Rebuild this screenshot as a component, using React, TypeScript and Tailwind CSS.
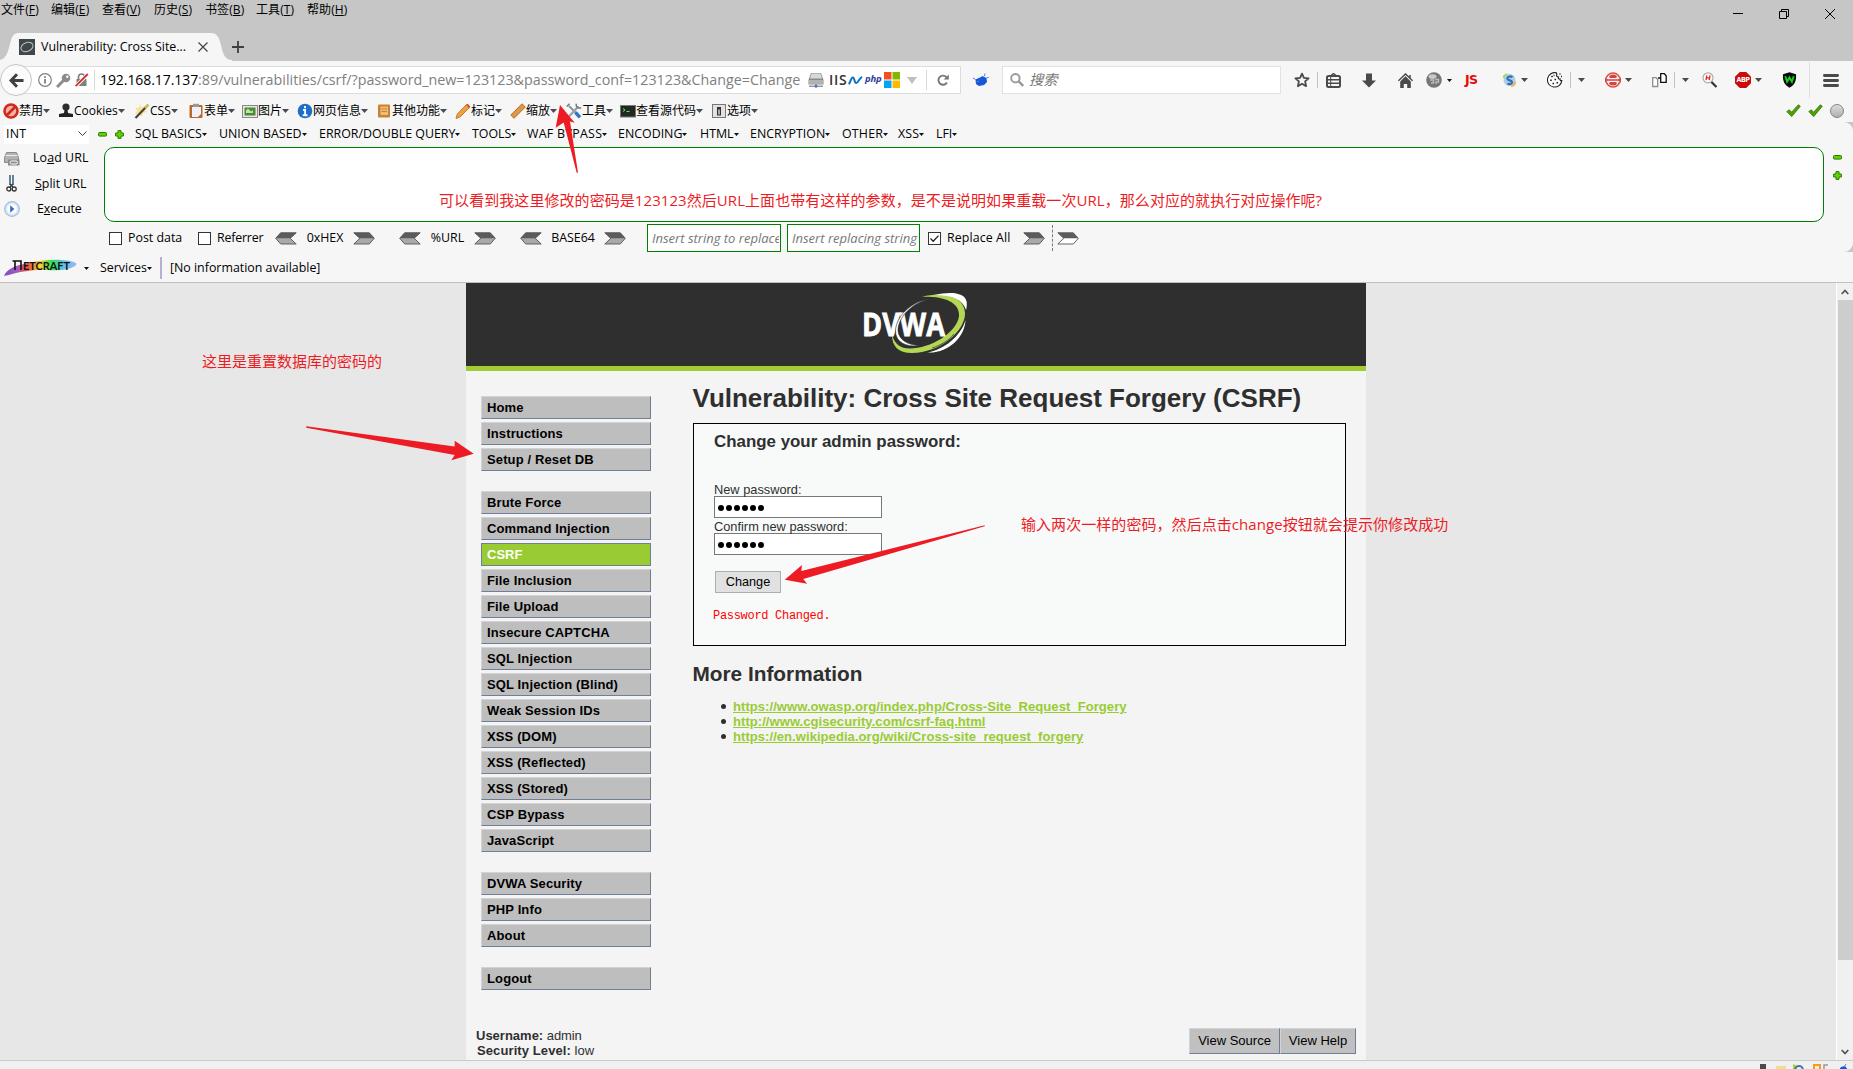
import type { ReactNode } from "react";

const kids = "flex items-center shrink-0 whitespace-nowrap";

/* ---------- small shared pieces ---------- */

function Caret({ className = "" }: { className?: string }) {
  return (
    <svg className={"shrink-0 " + className} width="7" height="4" viewBox="0 0 7 4">
      <path d="M0 0h7L3.5 4z" fill="#4a4a4a" />
    </svg>
  );
}

function TinyCaret() {
  return (
    <svg className="shrink-0" width="5" height="3" viewBox="0 0 5 3">
      <path d="M0 0h5L2.5 3z" fill="#111" />
    </svg>
  );
}

function Divider({ className = "" }: { className?: string }) {
  return <div className={"w-px shrink-0 bg-[#c4c4c4] " + className} />;
}

function Checkbox({ checked = false }: { checked?: boolean }) {
  return (
    <span className="flex h-[13px] w-[13px] shrink-0 items-center justify-center border border-[#333] bg-white">
      {checked && (
        <svg width="11" height="11" viewBox="0 0 11 11" fill="none" stroke="#222" strokeWidth="1.3">
          <path d="M1.5 5.5l2.7 2.7L9.5 2.6" />
        </svg>
      )}
    </span>
  );
}

function ArrowTag({ flip = false, hollow = false }: { flip?: boolean; hollow?: boolean }) {
  return (
    <svg className={flip ? "-scale-x-100 shrink-0" : "shrink-0"} width="22" height="13" viewBox="0 0 22 13">
      <path d="M.8.8h15.5l5 5.500-5 5.700H.8l6-5.700z" fill={hollow ? "#fff" : "#a9a9a9"} />
      <path d="M.8.8h15.500l5 5.500H6.800z" fill="#5c5c5c" />
      <path d="M.8.8h15.500l5 5.500-5 5.700H.8l6-5.700z" fill="none" stroke="#555" strokeWidth=".9" />
    </svg>
  );
}

function GreenMinus() {
  return (
    <svg className="shrink-0" width="9" height="9" viewBox="0 0 9 9">
      <rect x=".5" y="2.5" width="8" height="3.6" rx="1" fill="#5fd400" stroke="#2d7a00" />
    </svg>
  );
}

function GreenPlus() {
  return (
    <svg className="shrink-0" width="9" height="9" viewBox="0 0 9 9">
      <path d="M3 .6h3V3h2.400v3H6v2.400H3V6H.6V3H3z" fill="#5fd400" stroke="#2d7a00" strokeLinejoin="round" />
    </svg>
  );
}

function CheckMark() {
  return (
    <svg className="shrink-0" width="15" height="14" viewBox="0 0 15 14">
      <path d="M.8 7.600l2.600-1.800 2.200 2.400L12.400.8l1.900 1.500-8.600 10.300z" fill="#4fa000" stroke="#2f7400" strokeWidth=".8" />
    </svg>
  );
}

/* ---------- title bar ---------- */

const menus: [string, string, string][] = [
  ["文件", "F", "w-[50px]"],
  ["编辑", "E", "w-[51px]"],
  ["查看", "V", "w-[52px]"],
  ["历史", "S", "w-[51px]"],
  ["书签", "B", "w-[51px]"],
  ["工具", "T", "w-[51px]"],
  ["帮助", "H", "w-[51px]"],
];

function TitleBar() {
  return (
    <div className="relative flex h-[61px] flex-col justify-between bg-[#c6c6c6]">
      <div className="flex h-5 items-center pl-[1px] text-[12px] leading-4 tracking-[0.1px] text-black">
        {menus.map(([t, k, w]) => (
          <div key={k} className={"shrink-0 whitespace-nowrap " + w}>
            {t}(<u className="underline-offset-1">{k}</u>)
          </div>
        ))}
      </div>
      <div className="absolute top-[4px] right-0 flex h-5 items-center gap-[36px] pr-[18px]">
        <svg width="10" height="10" viewBox="0 0 10 10" stroke="#000" fill="none"><path d="M0 4.500h10" /></svg>
        <svg width="10" height="10" viewBox="0 0 10 10" stroke="#000" fill="none"><path d="M.5 2.500h7v7h-7zM2.500 2.500v-2h7v7h-2" /></svg>
        <svg width="10" height="10" viewBox="0 0 10 10" stroke="#000" fill="none"><path d="M0 0l10 10M10 0L0 10" /></svg>
      </div>
      <div className="flex h-[29px] items-center">
        <div className="relative flex h-[29px] w-[232px] shrink-0 items-center">
          <svg className="absolute top-0 left-0" width="232" height="29" viewBox="0 0 232 29">
            <path d="M0 28C6 27 8 20 10 12 12 3 14 1 20 1h191c6 0 8 4 10 12 2 9 4 15 11 15v1H0z" fill="#f6f6f6" />
          </svg>
          <div className="relative mt-[1px] flex items-center pl-[19px]">
            <svg width="16" height="16" viewBox="0 0 16 16">
              <rect width="16" height="16" fill="#3f4650" />
              <ellipse cx="8" cy="8" rx="6.300" ry="4.300" fill="none" stroke="#b9c7a5" strokeWidth="1" transform="rotate(-22 8 8)" />
            </svg>
            <span className="ml-[6px] w-[157px] text-[12.4px] whitespace-nowrap text-black">Vulnerability: Cross Site...</span>
            <svg width="10" height="10" viewBox="0 0 10 10" stroke="#444" strokeWidth="1.200"><path d="M.5.5l9 9M9.500.5l-9 9" /></svg>
          </div>
        </div>
        <svg className="mt-[1px]" width="12" height="12" viewBox="0 0 12 12" stroke="#3f3f3f" strokeWidth="1.800"><path d="M6 0v12M0 6h12" /></svg>
      </div>
    </div>
  );
}

/* ---------- navigation bar ---------- */

function ServerInfoIcons() {
  return (
    <div className="flex w-[110px] shrink-0 items-center">
      <svg className="shrink-0" width="16" height="16" viewBox="0 0 16 16">
        <path d="M3 1h10l2.500 7v4.500H.5V8z" fill="#8a8a8a" />
        <path d="M3.500 1.500h9l1.500 5H2z" fill="#d8d8d8" />
        <path d="M1 9h14M1 11h14" stroke="#e3e3e3" strokeWidth=".9" />
        <path d="M1 14.200h14M8 12v2" stroke="#666" />
        <circle cx="8" cy="14.300" r="1.500" fill="#3f7be0" />
      </svg>
      <span className="ml-[5px] w-[19px] shrink-0 text-[14px] leading-4 font-semibold tracking-[0.7px] text-[#333]">IIS</span>
      <svg className="shrink-0" width="15" height="9" viewBox="0 0 15 9" fill="none" stroke="#0a72c4" strokeWidth="2">
        <path d="M.6 8C2.600 7 2.800 1.400 4.800 1.400 6.800 1.400 6 7 8.200 7c2.400 0 3-5.400 6-6" />
      </svg>
      <span className="ml-[2px] w-[18px] shrink-0 pb-[2px] text-[9.5px] leading-3 font-bold tracking-[-0.2px] text-[#2c3e9c] italic">php</span>
      <svg className="ml-[1px] shrink-0" width="16" height="16" viewBox="0 0 16 16">
        <path fill="#f25022" d="M0 0h7.500v7.500H0z" />
        <path fill="#7fba00" d="M8.500 0H16v7.500H8.500z" />
        <path fill="#00a4ef" d="M0 8.500h7.500V16H0z" />
        <path fill="#ffb900" d="M8.500 8.500H16V16H8.500z" />
      </svg>
      <svg className="ml-[7px] shrink-0" width="10" height="7" viewBox="0 0 10 7"><path d="M0 0h10L5 7z" fill="#c0c0c0" /></svg>
    </div>
  );
}

function UrlBar() {
  return (
    <div className="flex h-[28px] w-[944px] shrink-0 items-center border border-[#dcdcdc] bg-white pl-[20px]">
      <svg className="shrink-0" width="14" height="14" viewBox="0 0 14 14" fill="none" stroke="#808080">
        <circle cx="7" cy="7" r="6.300" strokeWidth="1.200" />
        <path d="M7 6v4.400M7 3.200v1.700" strokeWidth="1.800" />
      </svg>
      <svg className="ml-[4px] shrink-0" width="15" height="15" viewBox="0 0 15 15">
        <circle cx="10" cy="5" r="4.300" fill="#8c8c8c" />
        <path d="M7.500 7.500L1 14" stroke="#8c8c8c" strokeWidth="3" />
        <circle cx="11.300" cy="3.700" r="1.200" fill="#fff" />
      </svg>
      <svg className="ml-[4px] shrink-0" width="14" height="14" viewBox="0 0 14 14">
        <path d="M1.500 6h10v7h-10z" fill="#808080" />
        <path d="M3.500 6V4a3 3 0 0 1 6 0v2" fill="none" stroke="#808080" strokeWidth="1.700" />
        <path d="M1 13L13 1" stroke="#fff" strokeWidth="3.400" />
        <path d="M.6 13.200L12.800 1" stroke="#d92d27" strokeWidth="1.800" />
      </svg>
      <Divider className="ml-[5px] h-5 !bg-[#dadada]" />
      <div className="ml-[5px] flex w-[702px] shrink-0 overflow-hidden leading-5 whitespace-nowrap">
        <span className="text-[14px] tracking-[-0.07px] text-black">192.168.17.137</span>
        <span className="text-[14.3px] text-[#808080]">:89/vulnerabilities/csrf/?password_new=123123&amp;password_conf=123123&amp;Change=Change</span>
      </div>
      <div className="w-[6px] shrink-0" />
      <ServerInfoIcons />
      <Divider className="ml-[8px] h-5 !bg-[#dadada]" />
      <svg className="ml-[10px] shrink-0" width="12" height="12" viewBox="0 0 12 12">
        <path d="M10 8.600A4.600 4.600 0 1 1 9.400 3" fill="none" stroke="#777" strokeWidth="1.900" />
        <path d="M11.800.4v5.200H6.600z" fill="#777" />
      </svg>
    </div>
  );
}

function NavIcon({ className, children }: { className: string; children: ReactNode }) {
  return <div className={"flex shrink-0 items-center " + className}>{children}</div>;
}

function NavBar() {
  return (
    <div className="flex h-[40px] items-center bg-[#f6f6f6] pb-[2px]">
      <div className="relative z-10 -mr-[15px] flex h-[32px] w-[32px] shrink-0 items-center justify-center rounded-full border border-[#c4c4c4] bg-[#fbfbfb]">
        <svg width="15" height="15" viewBox="0 0 15 15" fill="none" stroke="#404040" strokeWidth="3">
          <path d="M8 1.200L2 7.500l6 6.300M2.400 7.500H14.500" />
        </svg>
      </div>
      <UrlBar />
      <NavIcon className="ml-[12px] w-[29px]">
        <svg width="16" height="14" viewBox="0 0 16 14">
          <path d="M2.500 6.500l5-2.200L9.500 3l4 2 .5 4-3 3-5 1-3-2z" fill="#1557d6" />
          <path d="M0 5l2.500 1.500M11.500 3l.5-2.500M13.500 5l2.300-.8M3.500 9l3-1" stroke="#4a7fd8" />
        </svg>
      </NavIcon>
      <div className="flex h-[28px] w-[279px] shrink-0 items-center border border-[#e2e2e2] bg-white pl-[7px]">
        <svg width="14" height="14" viewBox="0 0 14 14" fill="none" stroke="#999">
          <circle cx="5.400" cy="5.200" r="4.200" strokeWidth="1.900" />
          <path d="M8.400 8.200l4.800 4.800" strokeWidth="2.400" />
        </svg>
        <span className="ml-[5px] text-[14.3px] leading-5 text-[#7a7a7a] italic">搜索</span>
      </div>
      <NavIcon className="ml-[13px] w-[23px]">
        <svg width="16" height="16" viewBox="0 0 16 16" fill="none" stroke="#4a4a4a" strokeWidth="1.800" strokeLinejoin="round">
          <path d="M8 1.600l1.900 4.200 4.700.5-3.500 3.100 1 4.800L8 11.800l-4.100 2.400 1-4.800L1.400 6.300l4.700-.5z" />
        </svg>
      </NavIcon>
      <Divider className="h-4" />
      <NavIcon className="ml-[8px] w-[36px]">
        <svg width="15" height="15" viewBox="0 0 15 15" fill="none" stroke="#4a4a4a">
          <rect x="1" y="3" width="13" height="11" rx="1.500" strokeWidth="2" />
          <path d="M5 2.500L7.500.5 10 2.500M2 6.700h11M2 10.300h11" strokeWidth="1.400" />
          <path d="M4.700 4v9" strokeWidth="1" />
        </svg>
      </NavIcon>
      <NavIcon className="w-[36px]">
        <svg width="14" height="15" viewBox="0 0 14 15"><path d="M4 .5h6v7h4L7 14.500 0 7.500h4z" fill="#4a4a4a" /></svg>
      </NavIcon>
      <NavIcon className="w-[28px]">
        <svg width="15" height="15" viewBox="0 0 15 15">
          <path d="M2.200 8.400L7.500 3.200l5.300 5.200V15H9.200v-4H5.800v4H2.200z" fill="#4a4a4a" />
          <path d="M.4 7.800L7.500 1l7.100 6.800M12 2v3" fill="none" stroke="#4a4a4a" strokeWidth="1.500" />
        </svg>
      </NavIcon>
      <NavIcon className="w-[39px] gap-[5px]">
        <svg width="16" height="16" viewBox="0 0 16 16">
          <circle cx="8" cy="8" r="7.800" fill="#767676" />
          <ellipse cx="6.500" cy="4.600" rx="4" ry="2.400" fill="#c8c8c8" />
          <path d="M4 8h3.500v3H5M9 7.500h3.500V10H10v2" stroke="#bcbcbc" strokeWidth="1.400" fill="none" />
        </svg>
        <TinyCaret />
      </NavIcon>
      <NavIcon className="w-[37px]">
        <span className="font-['DejaVu_Sans',sans-serif] text-[12.5px] leading-4 font-bold tracking-[-0.6px] text-[#e50b0b]">JS</span>
      </NavIcon>
      <NavIcon className="w-[45px] gap-[5px]">
        <svg width="14" height="14" viewBox="0 0 14 14" fill="none">
          <path d="M1 5C.5 2 3 .5 5.500.5L4.500 5z" fill="#a6dc3c" />
          <circle cx="7.500" cy="7" r="6" fill="#a9cdec" />
          <path d="M10.500 4.200C8 2.400 4.900 4 5.500 5.800s4.500 1.400 4.500 3.400-2.600 2.300-4.500 1.300" stroke="#3b6ea5" strokeWidth="2.200" />
          <path d="M13 8.500c.6 2.600-1 4.600-4 4.800" stroke="#f0b13a" strokeWidth="1.600" />
        </svg>
        <Caret />
      </NavIcon>
      <NavIcon className="w-[23px]">
        <svg width="16" height="16" viewBox="0 0 16 16">
          <path d="M9.500.9A7.200 7.200 0 1 0 14.800 8.600c-1.400.3-2-.6-1.700-1.600-1.600.3-2.200-.7-1.600-1.900C9.700 5 9 3.500 9.900 2.300z" fill="#fff" stroke="#222" strokeWidth="1.100" />
          <path d="M4.200 4.600h1.600M7.500 7.500h1.600M3.200 8.200h1.600M5.500 11.500h1.600M9.500 10.800h1.600M6.500 3.500h1M12.500 2h1M14 4.500h1" stroke="#222" strokeWidth="1.500" />
        </svg>
      </NavIcon>
      <Divider className="h-4" />
      <Caret className="mr-[20px] ml-[7px]" />
      <NavIcon className="w-[47px] gap-[4px]">
        <svg width="16" height="16" viewBox="0 0 16 16" fill="none">
          <circle cx="8" cy="8" r="7" stroke="#d8504c" strokeWidth="1.600" />
          <path d="M4 5Q4.500 2.500 8 2.500T12 5L11 6H5zM4 11Q4.500 13.500 8 13.500T12 11L11 10H5z" fill="#d8433f" />
          <path d="M0 8h16" stroke="#f6f6f6" strokeWidth="3.200" />
          <path d="M2.500 8h11M0 6.300l2.500 1.700L0 9.700zM16 6.300L13.500 8 16 9.700z" stroke="#d8433f" strokeWidth="1.400" fill="#d8433f" />
        </svg>
        <Caret />
      </NavIcon>
      <NavIcon className="w-[22px]">
        <svg width="15" height="16" viewBox="0 0 15 16" fill="#fff" strokeWidth="1.300">
          <path d="M.7 5.700h3.300l1.700 1.800v7H.7z" stroke="#8f8f8f" />
          <path d="M8.700 1.700h3.600l1.900 2v6.600H8.700zM6 6h2.500" stroke="#111" />
        </svg>
      </NavIcon>
      <Divider className="h-4" />
      <Caret className="mr-[13px] ml-[7px]" />
      <NavIcon className="w-[33px]">
        <svg width="16" height="16" viewBox="0 0 16 16">
          <path d="M9 9.500l5.500 5.500" stroke="#333" strokeWidth="2.200" />
          <circle cx="6" cy="5.800" r="5" fill="#fff" stroke="#aaa" strokeWidth="1.200" />
          <path d="M4.800 3.400L4 8.200M8 3.400l-.8 4.800M4.500 5.800h3" stroke="#e0241f" strokeWidth="1.300" />
        </svg>
      </NavIcon>
      <NavIcon className="w-[47px] gap-[4px]">
        <span className="flex h-[16px] w-[16px] items-center justify-center bg-[#cc0a0a] font-['DejaVu_Sans_Condensed','DejaVu_Sans',sans-serif] text-[7px] leading-[10px] font-bold tracking-[-0.5px] text-white [clip-path:polygon(30%_0,70%_0,100%_30%,100%_70%,70%_100%,30%_100%,0_70%,0_30%)]">ABP</span>
        <Caret />
      </NavIcon>
      <NavIcon className="w-[27px]">
        <svg width="15" height="16" viewBox="0 0 15 16">
          <path d="M7.500.3L14 2.300c.5 6-1 10.500-6.500 13.500C2 12.800.5 8.300 1 2.300z" fill="#0a0a0a" />
          <path d="M3.300 4.300l1.800 5.400 2.400-4.200 2.400 4.200 1.800-5.400" fill="none" stroke="#0fd51f" strokeWidth="1.900" />
        </svg>
      </NavIcon>
      <Divider className="h-[36px] !bg-[#e0e0e0]" />
      <svg className="ml-[13px] shrink-0" width="16" height="13" viewBox="0 0 16 13" stroke="#4a4a4a" strokeWidth="2.800" strokeLinecap="round">
        <path d="M1.400 1.500h13.200M1.400 6.500h13.200M1.400 11.500h13.200" />
      </svg>
    </div>
  );
}

/* ---------- developer toolbar ---------- */

const devTools: { label: string; w: string; icon: ReactNode }[] = [
  {
    label: "禁用", w: "w-[55px]",
    icon: <><circle cx="8" cy="8" r="6.500" fill="#f3b0a4" stroke="#cf2a1c" strokeWidth="2.600" /><path d="M12.500 3.500l-9 9" stroke="#cf2a1c" strokeWidth="2.600" /></>,
  },
  {
    label: "Cookies", w: "w-[76px]",
    icon: <><circle cx="8" cy="4" r="3.600" fill="#2e2e2e" /><path d="M6.500 7h3l.5 3 5 1v3H1v-3l5-1z" fill="#222" /></>,
  },
  {
    label: "CSS", w: "w-[54px]",
    icon: <><path d="M6 1l1.500 3.500L11 3 9.500 7l4 2-4.500 1-1 4-2.500-3.500L1 11l2.500-3L1 4.500l4 .5z" fill="#f8e28a" /><path d="M1.500 15L14 2" stroke="#444" strokeWidth="2.200" /><path d="M11 5l3.500-3.600" stroke="#d9c04a" strokeWidth="2.200" /></>,
  },
  {
    label: "表单", w: "w-[54px]",
    icon: <><rect x="1.500" y="2" width="13" height="13" rx="1" fill="#b9692c" /><path d="M4 4h9v7l-3 3H4z" fill="#eef2f8" /><path d="M5 .8h6V4H5z" fill="#9a9a9a" /></>,
  },
  {
    label: "图片", w: "w-[55px]",
    icon: <><rect x=".5" y="2.500" width="15" height="12" fill="#e8e8e8" stroke="#888" /><path d="M2.500 4.500h11v8h-11z" fill="#4b8a36" /><path d="M4 7.500l2-2 3 3 2-1.500v3H4z" fill="#c5e29c" /></>,
  },
  {
    label: "网页信息", w: "w-[79px]",
    icon: <><circle cx="8" cy="8" r="7.300" fill="#1f6fca" /><path d="M8 3v2.200M6.100 7h2v5M5.700 12.200h4.800" stroke="#fff" strokeWidth="1.900" fill="none" /></>,
  },
  {
    label: "其他功能", w: "w-[79px]",
    icon: <><rect x="2" y="1.500" width="12" height="13" rx="1" fill="#c98234" /><path d="M4.500 3.500h7.500v8.500H4.500z" fill="#eebd78" /><path d="M5.500 6h5.500M5.500 8.500h5.500" stroke="#c98234" /></>,
  },
  {
    label: "标记", w: "w-[55px]",
    icon: <><path d="M1 15.500l1.300-4.500L11.500 1.500l3 3L5 14z" fill="#f0a13a" stroke="#b5642a" strokeWidth=".8" /><path d="M11 2l3.300 3.200 1-1.700-2.500-2.700z" fill="#d84c40" /></>,
  },
  {
    label: "缩放", w: "w-[56px]",
    icon: <path d="M.8 12L12 .8l3.300 3.200L4 15.300z" fill="#dd9848" stroke="#a86422" strokeWidth=".9" />,
  },
  {
    label: "工具", w: "w-[54px]",
    icon: <><path d="M3 3l10 10" stroke="#8b959e" strokeWidth="2" /><path d="M9.500 9.500l4.500 4.800" stroke="#2f77cc" strokeWidth="3.400" /><path d="M12.500 3.200L3 13.500" stroke="#9aa3ab" strokeWidth="2.300" /><path d="M10.500.8c-1.500 2 .8 5 4.700 4M.8 3.500L3.500.8" fill="none" stroke="#6d7780" strokeWidth="1.500" /></>,
  },
  {
    label: "查看源代码", w: "w-[91px]",
    icon: <><rect x=".5" y="2.500" width="15" height="11.500" fill="#1e2a20" stroke="#777" /><path d="M3 5.500l2 1.500-2 1.500M6.500 8.500h3" stroke="#7fd36b" fill="none" /></>,
  },
  {
    label: "选项", w: "w-[48px]",
    icon: <><rect x="1.500" y="1.500" width="13" height="13" fill="#e2e2e2" stroke="#777" /><path d="M6 4h4v8.500H6z" fill="#333" /><path d="M7.300 6.500h1.400v5H7.300z" fill="#ddd" /></>,
  },
];

function DevToolbar() {
  return (
    <div className="flex h-[21px] items-center bg-[#f6f6f6] pb-[2px] pl-[3px]">
      {devTools.map((d) => (
        <div key={d.label} className={kids + " " + d.w}>
          <svg className="shrink-0" width="16" height="16" viewBox="0 0 16 16">{d.icon}</svg>
          <span className="text-[12px] leading-4 text-black">{d.label}</span>
          <Caret className="mt-px" />
        </div>
      ))}
      <div className="ml-auto flex items-center gap-[7px] pr-[9px]">
        <CheckMark />
        <CheckMark />
        <span className="h-[14px] w-[14px] rounded-full border border-[#858585] bg-linear-to-b from-[#dcdcdc] to-[#b0b0b0]" />
      </div>
    </div>
  );
}

/* ---------- hackbar ---------- */

const hackMenus: [string, string][] = [
  ["SQL BASICS", "w-[84px]"],
  ["UNION BASED", "w-[100px]"],
  ["ERROR/DOUBLE QUERY", "w-[153px]"],
  ["TOOLS", "w-[55px]"],
  ["WAF BYPASS", "w-[91px]"],
  ["ENCODING", "w-[82px]"],
  ["HTML", "w-[50px]"],
  ["ENCRYPTION", "w-[92px]"],
  ["OTHER", "w-[56px]"],
  ["XSS", "w-[38px]"],
  ["LFI", "w-[30px]"],
];

function Codec({ label, w }: { label: string; w: string }) {
  return (
    <div className={kids + " justify-between " + w}>
      <ArrowTag flip />
      <span className="text-[12.4px]">{label}</span>
      <ArrowTag />
    </div>
  );
}

function HackBar() {
  return (
    <div className="bg-[#c6c6c6]">
      <div className="flex h-[130px] flex-col rounded-r-[9px] bg-[#f6f6f6] text-[12.4px] leading-4 text-black">
        <div className="flex h-[24px] items-center pl-1">
          <div className="flex h-[19px] w-[85px] shrink-0 items-center justify-between bg-white pr-[2px] pl-[2px]">
            <span className="tracking-[0.2px]">INT</span>
            <svg width="9" height="6" viewBox="0 0 9 6" fill="none" stroke="#444"><path d="M.5.5l4 4 4-4" /></svg>
          </div>
          <div className="ml-[9px] flex w-[37px] shrink-0 items-center gap-[8px]">
            <GreenMinus />
            <GreenPlus />
          </div>
          {hackMenus.map(([m, w]) => (
            <div key={m} className={kids + " " + w}>
              <span className={m === "WAF BYPASS" ? "tracking-[0.25px]" : m === "OTHER" || m === "XSS" ? "tracking-[0.2px]" : ""}>{m}</span>
              <TinyCaret />
            </div>
          ))}
        </div>
        <div className="flex h-[78px] shrink-0">
          <div className="-mt-[1px] flex w-[104px] shrink-0 flex-col pl-[4px]">
            <div className="flex h-[25px] items-center">
              <svg className="mt-[2px]" width="16" height="14" viewBox="0 0 16 14">
                <path d="M2.500.5h10l2 5v5h-14v-5z" fill="#b3b3b3" stroke="#777" strokeWidth=".8" />
                <path d="M1.500 3.500h12" stroke="#eee" />
                <path d="M4 7.500h11.500v6H4z" fill="#8b8b8b" /><rect x="6" y="9" width="7.500" height="3" rx="1.500" fill="none" stroke="#fff" />
              </svg>
              <span className="ml-[13px] tracking-[0.1px]">Lo<u>a</u>d URL</span>
            </div>
            <div className="flex h-[27px] items-center">
              <svg className="ml-[2px]" width="11" height="19" viewBox="0 0 11 19" fill="none">
                <path d="M4 1v10M7 1v10" stroke="#5f8598" strokeWidth="2" />
                <path d="M4 10l3 3M7 10l-3 3" stroke="#333" strokeWidth="1.300" />
                <circle cx="2.800" cy="15" r="2" stroke="#333" strokeWidth="1.300" /><circle cx="8.200" cy="15" r="2" stroke="#333" strokeWidth="1.300" />
              </svg>
              <span className="ml-[18px]"><u>S</u>plit URL</span>
            </div>
            <div className="flex h-[24px] items-center">
              <svg width="16" height="16" viewBox="0 0 16 16">
                <circle cx="8" cy="8" r="7.300" fill="#dfe8f5" stroke="#a9bcdb" strokeWidth="1.200" /><circle cx="8" cy="8" r="4.800" fill="#fff" />
                <path d="M6.200 4.200L10.400 8l-4.200 3.800z" fill="#2c6fc4" />
              </svg>
              <span className="ml-[17px] tracking-[-0.1px]">E<u>x</u>ecute</span>
            </div>
          </div>
          <div className="mt-[1px] h-[75px] w-[1720px] shrink-0 rounded-[10px] border border-[#008000] bg-white" />
          <div className="flex w-[29px] shrink-0 flex-col items-center gap-[9px] pt-[7px] pr-[4px] pl-[2px]">
            <GreenMinus />
            <GreenPlus />
          </div>
        </div>
        <div className="flex h-[28px] items-center pl-[109px]">
          <Checkbox />
          <span className="ml-[6px] w-[70px] shrink-0">Post data</span>
          <Checkbox />
          <span className="ml-[6px] w-[58px] shrink-0 tracking-[-0.2px]">Referrer</span>
          <Codec label="0xHEX" w="w-[100px]" />
          <div className="w-[24px] shrink-0" />
          <Codec label="%URL" w="w-[97px]" />
          <div className="w-[24px] shrink-0" />
          <Codec label="BASE64" w="w-[106px]" />
          <div className="ml-[21px] flex h-[28px] w-[134px] shrink-0 items-center overflow-hidden border border-[#008000] bg-white pl-[4px]">
            <span className="w-[127px] shrink-0 overflow-hidden text-[13px] whitespace-nowrap text-[#777] italic">Insert string to replace</span>
          </div>
          <div className="ml-[6px] flex h-[28px] w-[133px] shrink-0 items-center overflow-hidden border border-[#008000] bg-white pl-[4px]">
            <span className="text-[13px] whitespace-nowrap text-[#777] italic">Insert replacing string</span>
          </div>
          <div className="w-[8px] shrink-0" />
          <Checkbox checked />
          <span className="ml-[6px] w-[76px] shrink-0 tracking-[0.1px]">Replace All</span>
          <ArrowTag />
          <div className="mr-[4px] ml-[7px] h-[26px] w-0 shrink-0 border-l border-dashed border-[#777]" />
          <ArrowTag hollow />
        </div>
      </div>
    </div>
  );
}

function NetcraftBar() {
  return (
    <div className="flex h-[31px] items-center border-b border-[#c0c0c0] bg-[#f6f6f6] pt-[2px] text-[12.4px] leading-4 text-black">
      <svg className="ml-[4px] shrink-0" width="73" height="18" viewBox="0 0 73 18">
        <defs>
          <linearGradient id="rainbow">
            <stop offset="0" stopColor="#7a4fc4" /><stop offset=".18" stopColor="#a05cc0" /><stop offset=".33" stopColor="#f0503c" />
            <stop offset=".5" stopColor="#f5d33c" /><stop offset=".66" stopColor="#2ee04a" /><stop offset=".82" stopColor="#5fc0e8" /><stop offset="1" stopColor="#9fb4f4" />
          </linearGradient>
        </defs>
        <path d="M0 17C3 10 10 7 20 5 38 0 62-1 72 4c2 3-6 6-15 7-14 1-20-1-33 1C13 13 6 16 0 17z" fill="url(#rainbow)" />
        <path d="M8.500 2H17v9M11 2v9" fill="none" stroke="#111" strokeWidth="1.600" />
        <text x="19" y="11" textLength="47" lengthAdjust="spacingAndGlyphs" fontSize="10.500" fontWeight="700" fontFamily="Lato" fill="#111">ETCRAFT</text>
      </svg>
      <div className="ml-[7px] flex"><TinyCaret /></div>
      <span className="ml-[11px]">Services</span>
      <TinyCaret />
      <div className="ml-[8px] h-[22px] w-[2px] shrink-0 bg-[#b4b0d0]" />
      <span className="ml-[8px] text-[12.4px]">[No information available]</span>
    </div>
  );
}

/* ---------- web page ---------- */

const menuGroups: string[][] = [
  ["Home", "Instructions", "Setup / Reset DB"],
  [
    "Brute Force", "Command Injection", "CSRF", "File Inclusion", "File Upload", "Insecure CAPTCHA", "SQL Injection",
    "SQL Injection (Blind)", "Weak Session IDs", "XSS (DOM)", "XSS (Reflected)", "XSS (Stored)", "CSP Bypass", "JavaScript",
  ],
  ["DVWA Security", "PHP Info", "About"],
  ["Logout"],
];

const links = [
  "https://www.owasp.org/index.php/Cross-Site_Request_Forgery",
  "http://www.cgisecurity.com/csrf-faq.html",
  "https://en.wikipedia.org/wiki/Cross-site_request_forgery",
];

function Logo() {
  return (
    <svg width="108" height="62" viewBox="0 0 108 62">
      <path d="M60 3.700C82-1 102 3 103 20 103.500 38 78 60 50 60 36 60 30 53 30 42 33 51 38 55.500 48 55.500 68 55.500 95 40 97 23 98 9 82 3 60 3.700z" fill="#b3d655" />
      <path d="M72 2C88-1.500 103-1 104.700 9 105 12 104.600 15 104 17 101 7 91 2 72 2z" fill="#fff" />
      <path d="M103.500 27C103 44 86 61 65 59.500 82 57 99 43 103.500 27z" fill="#fff" />
      <path d="M92 41C86 48 79 52 70 55" fill="none" stroke="#2f2f2f" strokeWidth=".7" />
      <text x="0" y="42.500" textLength="83" lengthAdjust="spacingAndGlyphs" fontFamily="Open Sans" fontWeight="700" fontSize="32.500" fill="#fff" stroke="#fff" strokeWidth=".8">DVWA</text>
      <path d="M67 6C48 11 36 25 36 38 37 47 46 52 57 52.500 44 54.500 33.500 49 33.500 38 34 24 48 9 67 6z" fill="#fff" stroke="#2f2f2f" strokeWidth=".6" />
    </svg>
  );
}

function SideMenu() {
  return (
    <div className="flex w-[170px] flex-col gap-[20px]">
      {menuGroups.map((g) => (
        <div key={g[0]} className="flex flex-col gap-[3px]">
          {g.map((m) => (
            <div
              key={m}
              className={
                m === "CSRF"
                  ? "flex h-[23px] items-center border border-[#6f7f9a] bg-[#99cc33] pl-[5px] text-[13px] font-bold text-white"
                  : "flex h-[23px] items-center border border-t-[#d3d3d3] border-r-[#6f7f9a] border-b-[#6f7f9a] border-l-[#d3d3d3] bg-[#bebebe] pl-[5px] text-[13px] font-bold tracking-[0.13px] text-black"
              }
            >
              {m}
            </div>
          ))}
        </div>
      ))}
    </div>
  );
}

function PasswordField({ label }: { label: string }) {
  return (
    <div>
      <div className="h-[15px] pt-px text-[12.8px] leading-[15px]">{label}</div>
      <div className="flex h-[22px] w-[168px] items-center gap-[2px] border border-[#777] bg-white pt-[2px] pl-[3px]">
        {[0, 1, 2, 3, 4, 5].map((i) => (
          <span key={i} className="h-[6px] w-[6px] rounded-full bg-black" />
        ))}
      </div>
    </div>
  );
}

function Page() {
  return (
    <div className="flex w-[900px] shrink-0 flex-col bg-[#f4f4f4] font-['Liberation_Sans',sans-serif] text-[#2f2f2f]">
      <div className="flex h-[88px] shrink-0 justify-center border-b-[5px] border-[#a1cc33] bg-[#2f2f2f] pt-[10px]">
        <Logo />
      </div>
      <div className="flex flex-1">
        <div className="flex w-[227px] shrink-0 flex-col pl-[15px]">
          <div className="pt-[25px]"><SideMenu /></div>
          <div className="mt-[38px] -ml-[5px] text-[13px] leading-[15px] whitespace-nowrap">
            <div><b>Username:</b> <span className="tracking-[-0.1px]">admin</span></div>
            <div className="pl-[1px]"><b className="tracking-[0.1px]">Security Level:</b> low</div>
          </div>
        </div>
        <div className="flex w-[653px] shrink-0 flex-col">
          <h1 className="mt-[11px] h-[32px] -indent-[0.5px] text-[26px] leading-[32px] font-bold whitespace-nowrap">Vulnerability: Cross Site Request Forgery (CSRF)</h1>
          <div className="mt-[9px] h-[223px] border border-black bg-[#f8fafa] pl-[20px]">
            <h3 className="mt-[8px] h-[20px] text-[16.9px] leading-[20px] font-bold">Change your admin password:</h3>
            <div className="mt-[29px]">
              <PasswordField label="New password:" />
              <PasswordField label="Confirm new password:" />
            </div>
            <button className="mt-[16px] ml-[1px] flex h-[22px] w-[66px] items-center justify-center border border-[#adadad] bg-[#e1e1e1] pt-px text-[12.7px] text-black">Change</button>
            <pre className="mt-[15px] -ml-[1px] font-['Liberation_Mono',monospace] text-[12px] leading-4 tracking-[-0.3px] text-[#ff0000]">Password Changed.</pre>
          </div>
          <h2 className="mt-[16px] h-[24px] -indent-[0.5px] text-[20.8px] leading-[24px] font-bold">More Information</h2>
          <ul className="mt-[13px] text-[13.1px] leading-[15px] font-bold">
            {links.map((l) => (
              <li key={l} className="flex items-center pl-[28px]">
                <span className="mr-[7px] h-[5px] w-[5px] rounded-full bg-[#2f2f2f]" />
                <a className="tracking-[0.02px] text-[#99cc33] underline">{l}</a>
              </li>
            ))}
          </ul>
          <div className="mt-auto mr-[-10px] mb-[6px] flex justify-end text-[13px] text-black">
            <div className="flex h-[26px] w-[91px] items-center justify-center border border-t-[#d3d3d3] border-r-[#6f7f9a] border-b-[#6f7f9a] border-l-[#d3d3d3] bg-[#c0c0c0]">View Source</div>
            <div className="flex h-[26px] w-[76px] items-center justify-center border border-t-[#d3d3d3] border-r-[#6f7f9a] border-b-[#6f7f9a] border-l-[#d3d3d3] bg-[#c0c0c0]">View Help</div>
          </div>
        </div>
      </div>
    </div>
  );
}

function Scrollbar() {
  return (
    <div className="flex w-[17px] shrink-0 flex-col items-center border-l border-white bg-[#f0f0f0]">
      <svg className="mt-[6px]" width="8" height="6" viewBox="0 0 8 6" fill="none" stroke="#505050" strokeWidth="1.700"><path d="M.7 5L4 1.500 7.300 5" /></svg>
      <div className="mt-[5px] h-[660px] w-[15px] bg-[#cdcdcd]" />
      <svg className="mt-auto mb-[5px]" width="8" height="6" viewBox="0 0 8 6" fill="none" stroke="#505050" strokeWidth="1.700"><path d="M.7 1L4 4.500 7.300 1" /></svg>
    </div>
  );
}

function StatusBar() {
  return (
    <div className="flex h-[9px] items-start overflow-hidden border-t border-[#c8c8c8] bg-[#f0f0f0] pl-[1760px]">
      <svg className="mt-[3px] shrink-0" width="93" height="6" viewBox="0 0 93 6">
        <path d="M0 0h6v6H0z" fill="#4a4a4a" />
        <path d="M16 2h10v4H16z" fill="#f1dc94" />
        <path d="M33 0l4 2v4h-4z" fill="#9fd62f" /><circle cx="39" cy="6" r="4" fill="none" stroke="#3f78b5" strokeWidth="2" />
        <path d="M54 6V1h6v5" fill="none" stroke="#f79a1c" strokeWidth="2" /><path d="M64 6V1h4" fill="none" stroke="#999" strokeWidth="1.500" />
        <path d="M79 6l2-3 4-1 3 4z" fill="#1557d6" /><path d="M84 3l2-3" stroke="#4a7fd8" />
      </svg>
    </div>
  );
}

/* ---------- hand-drawn notes over the window ---------- */

function Annotations() {
  return (
    <div className="pointer-events-none absolute inset-0 z-20 overflow-hidden text-[15px] leading-5 whitespace-nowrap text-[#ed1c24]">
      <svg className="absolute inset-0" width="1853" height="1069" viewBox="0 0 1853 1069" fill="#ed1c24">
        <path d="M560 105L555.700 127.700 563.700 122.500 576.700 172.700H578L570 121.500 574.700 122.700z" />
        <path d="M306.300 426.300L454.700 446.500V440.700L473.700 453.700 451.300 460.300 454.700 455 306.300 427.700z" />
        <path d="M984.700 525.200L801.300 571 802 565 784.700 579.700 807 583.700 803.300 579 984.700 526.300z" />
      </svg>
      <div className="absolute top-[190px] left-[439px] tracking-[0.065px]">可以看到我这里修改的密码是123123然后URL上面也带有这样的参数，是不是说明如果重载一次URL，那么对应的就执行对应操作呢?</div>
      <div className="absolute top-[351px] left-[202px]">这里是重置数据库的密码的</div>
      <div className="absolute top-[514px] left-[1021px] tracking-[0.06px]">输入两次一样的密码，然后点击change按钮就会提示你修改成功</div>
    </div>
  );
}

export default function App() {
  return (
    <div className="relative flex h-[1069px] w-[1853px] flex-col overflow-hidden bg-[#f6f6f6] font-['Open_Sans','Noto_Sans_CJK_SC',sans-serif]">
      <TitleBar />
      <NavBar />
      <DevToolbar />
      <HackBar />
      <NetcraftBar />
      <div className="flex min-h-0 flex-1 bg-[#e7e7e7]">
        <div className="flex flex-1 overflow-hidden pl-[466px]"><Page /></div>
        <Scrollbar />
      </div>
      <StatusBar />
      <Annotations />
    </div>
  );
}
